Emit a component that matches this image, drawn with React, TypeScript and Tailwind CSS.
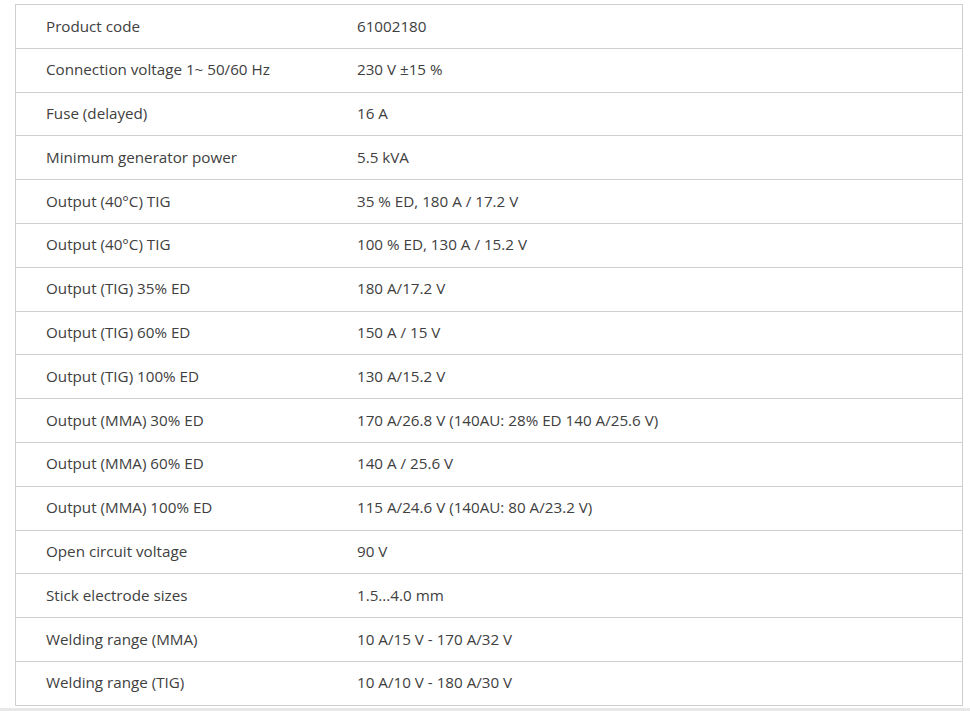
import React from "react";

const rows: [string, string][] = [
  ["Product code", "61002180"],
  ["Connection voltage 1~ 50/60 Hz", "230 V ±15 %"],
  ["Fuse (delayed)", "16 A"],
  ["Minimum generator power", "5.5 kVA"],
  ["Output (40°C) TIG", "35 % ED, 180 A / 17.2 V"],
  ["Output (40°C) TIG", "100 % ED, 130 A / 15.2 V"],
  ["Output (TIG) 35% ED", "180 A/17.2 V"],
  ["Output (TIG) 60% ED", "150 A / 15 V"],
  ["Output (TIG) 100% ED", "130 A/15.2 V"],
  ["Output (MMA) 30% ED", "170 A/26.8 V (140AU: 28% ED 140 A/25.6 V)"],
  ["Output (MMA) 60% ED", "140 A / 25.6 V"],
  ["Output (MMA) 100% ED", "115 A/24.6 V (140AU: 80 A/23.2 V)"],
  ["Open circuit voltage", "90 V"],
  ["Stick electrode sizes", "1.5...4.0 mm"],
  ["Welding range (MMA)", "10 A/15 V - 170 A/32 V"],
  ["Welding range (TIG)", "10 A/10 V - 180 A/30 V"],
];

export default function App() {
  return (
    <div className="w-[970px] h-[711px] bg-white overflow-hidden flex flex-col" style={{ fontFamily: '"Open Sans", Arial, sans-serif' }}>
      <div className="pt-[4px] pl-[15px] flex-1">
        <div className="w-[948px] border-l border-r border-[#cfcfcf] border-b">
          {rows.map(([k, v], i) => (
            <div key={i} className="h-[43.8px] border-t border-[#cfcfcf] flex items-center pb-[1px] text-[15.2px] text-[#404040]">
              <div className="w-[341px] pl-[30px]">{k}</div>
              <div>{v}</div>
            </div>
          ))}
        </div>
      </div>
      <div className="h-[3px] bg-[#e8e8e8]" />
    </div>
  );
}
